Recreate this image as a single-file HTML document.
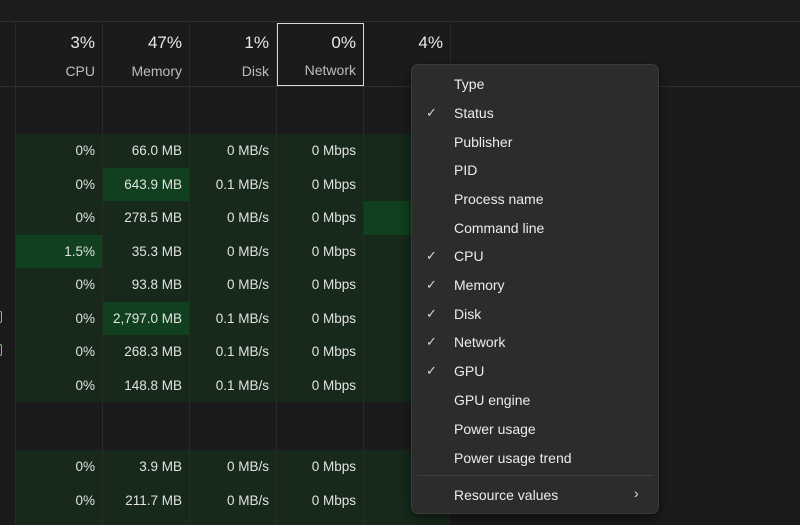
<!DOCTYPE html>
<html><head><meta charset="utf-8"><style>
*{margin:0;padding:0;box-sizing:border-box}
body{width:800px;height:525px;background:#1b1b1b;font-family:"Liberation Sans",sans-serif;color:#e6e6e6;position:relative;overflow:hidden}
.a{position:absolute}
.vl{position:absolute;top:22px;bottom:0;width:1px;background:#2a2a2a}
.hp{position:absolute;top:33px;font-size:17px;text-align:right;color:#e8e8e8}
.hl{position:absolute;top:63px;font-size:14px;text-align:right;color:#bdbdbd}
.row{position:absolute;left:15px;width:435px;height:34px;background:#16291b}
.c{position:absolute;font-size:13.5px;text-align:right;color:#e2e2e2;line-height:34px}
.hi{position:absolute;background:#10401d}
.menu{position:absolute;left:411px;top:64px;width:248px;height:450px;background:#2c2c2c;border:1px solid #3a3a3a;border-radius:7px;box-shadow:0 4px 12px rgba(0,0,0,.5)}
.mi{position:absolute;left:42px;font-size:14px;color:#ececec}
.ck{position:absolute;left:14px;font-size:13px;color:#cfd8e0}
</style></head><body>
<div class="a" style="left:0;top:0;width:800px;height:22px;background:#1c1c1c"></div>
<div class="a" style="left:0;top:21px;width:800px;height:1px;background:#2e2e2e"></div>
<div class="a" style="left:0;top:86px;width:800px;height:1px;background:#2e2e2e"></div>

<div class="row" style="top:134px"></div>
<div class="row" style="top:168px"></div>
<div class="row" style="top:201px"></div>
<div class="row" style="top:235px"></div>
<div class="row" style="top:268px"></div>
<div class="row" style="top:302px"></div>
<div class="row" style="top:335px"></div>
<div class="row" style="top:369px;height:33px"></div>
<div class="row" style="top:450px"></div>
<div class="row" style="top:484px;height:41px"></div>
<div class="hi" style="left:102px;top:168px;width:87px;height:33px"></div>
<div class="hi" style="left:363px;top:201px;width:87px;height:34px"></div>
<div class="hi" style="left:15px;top:235px;width:87px;height:33px"></div>
<div class="hi" style="left:102px;top:302px;width:87px;height:33px"></div>

<div class="vl" style="left:15px"></div>
<div class="vl" style="left:102px"></div>
<div class="vl" style="left:189px"></div>
<div class="vl" style="left:276px"></div>
<div class="vl" style="left:363px"></div>
<div class="vl" style="left:450px;bottom:auto;height:64px"></div>

<div class="a" style="left:277px;top:23px;width:87px;height:63px;border:1px solid #d8d8d8"></div>

<div class="hp" style="left:15px;width:80px">3%</div><div class="hl" style="left:15px;width:80px">CPU</div>
<div class="hp" style="left:102px;width:80px">47%</div><div class="hl" style="left:102px;width:80px">Memory</div>
<div class="hp" style="left:189px;width:80px">1%</div><div class="hl" style="left:189px;width:80px">Disk</div>
<div class="hp" style="left:276px;width:80px">0%</div><div class="hl" style="left:276px;width:80px;top:62px">Network</div>
<div class="hp" style="left:363px;width:80px">4%</div>

<div class="a" style="left:0;top:0">
<div class="c" style="left:15px;width:80px;top:134px">0%</div><div class="c" style="left:102px;width:80px;top:134px">66.0 MB</div><div class="c" style="left:189px;width:80px;top:134px">0 MB/s</div><div class="c" style="left:276px;width:80px;top:134px">0 Mbps</div>
<div class="c" style="left:15px;width:80px;top:168px">0%</div><div class="c" style="left:102px;width:80px;top:168px">643.9 MB</div><div class="c" style="left:189px;width:80px;top:168px">0.1 MB/s</div><div class="c" style="left:276px;width:80px;top:168px">0 Mbps</div>
<div class="c" style="left:15px;width:80px;top:201px">0%</div><div class="c" style="left:102px;width:80px;top:201px">278.5 MB</div><div class="c" style="left:189px;width:80px;top:201px">0 MB/s</div><div class="c" style="left:276px;width:80px;top:201px">0 Mbps</div>
<div class="c" style="left:15px;width:80px;top:235px">1.5%</div><div class="c" style="left:102px;width:80px;top:235px">35.3 MB</div><div class="c" style="left:189px;width:80px;top:235px">0 MB/s</div><div class="c" style="left:276px;width:80px;top:235px">0 Mbps</div>
<div class="c" style="left:15px;width:80px;top:268px">0%</div><div class="c" style="left:102px;width:80px;top:268px">93.8 MB</div><div class="c" style="left:189px;width:80px;top:268px">0 MB/s</div><div class="c" style="left:276px;width:80px;top:268px">0 Mbps</div>
<div class="c" style="left:15px;width:80px;top:302px">0%</div><div class="c" style="left:102px;width:80px;top:302px">2,797.0 MB</div><div class="c" style="left:189px;width:80px;top:302px">0.1 MB/s</div><div class="c" style="left:276px;width:80px;top:302px">0 Mbps</div>
<div class="c" style="left:15px;width:80px;top:335px">0%</div><div class="c" style="left:102px;width:80px;top:335px">268.3 MB</div><div class="c" style="left:189px;width:80px;top:335px">0.1 MB/s</div><div class="c" style="left:276px;width:80px;top:335px">0 Mbps</div>
<div class="c" style="left:15px;width:80px;top:369px">0%</div><div class="c" style="left:102px;width:80px;top:369px">148.8 MB</div><div class="c" style="left:189px;width:80px;top:369px">0.1 MB/s</div><div class="c" style="left:276px;width:80px;top:369px">0 Mbps</div>
<div class="c" style="left:15px;width:80px;top:450px">0%</div><div class="c" style="left:102px;width:80px;top:450px">3.9 MB</div><div class="c" style="left:189px;width:80px;top:450px">0 MB/s</div><div class="c" style="left:276px;width:80px;top:450px">0 Mbps</div>
<div class="c" style="left:15px;width:80px;top:484px">0%</div><div class="c" style="left:102px;width:80px;top:484px">211.7 MB</div><div class="c" style="left:189px;width:80px;top:484px">0 MB/s</div><div class="c" style="left:276px;width:80px;top:484px">0 Mbps</div>
</div>
<div class="a" style="left:-4px;top:311px;width:6px;height:12px;border:1px solid #6fcf5f;border-radius:2px"></div>
<div class="a" style="left:-4px;top:344px;width:6px;height:12px;border:1px solid #6fcf5f;border-radius:2px"></div>

<div class="menu">
<div class="mi" style="top:11px">Type</div>
<div class="ck" style="top:40px">✓</div><div class="mi" style="top:40px">Status</div>
<div class="mi" style="top:69px">Publisher</div>
<div class="mi" style="top:97px">PID</div>
<div class="mi" style="top:126px">Process name</div>
<div class="mi" style="top:155px">Command line</div>
<div class="ck" style="top:183px">✓</div><div class="mi" style="top:183px">CPU</div>
<div class="ck" style="top:212px">✓</div><div class="mi" style="top:212px">Memory</div>
<div class="ck" style="top:241px">✓</div><div class="mi" style="top:241px">Disk</div>
<div class="ck" style="top:269px">✓</div><div class="mi" style="top:269px">Network</div>
<div class="ck" style="top:298px">✓</div><div class="mi" style="top:298px">GPU</div>
<div class="mi" style="top:327px">GPU engine</div>
<div class="mi" style="top:356px">Power usage</div>
<div class="mi" style="top:385px">Power usage trend</div>
<div class="a" style="left:5px;top:410px;width:237px;height:1px;background:#3d3d3d"></div>
<div class="mi" style="top:422px">Resource values</div>
<div class="a" style="left:222px;top:420px;font-size:14px;color:#ddd">›</div>
</div>
</body></html>
